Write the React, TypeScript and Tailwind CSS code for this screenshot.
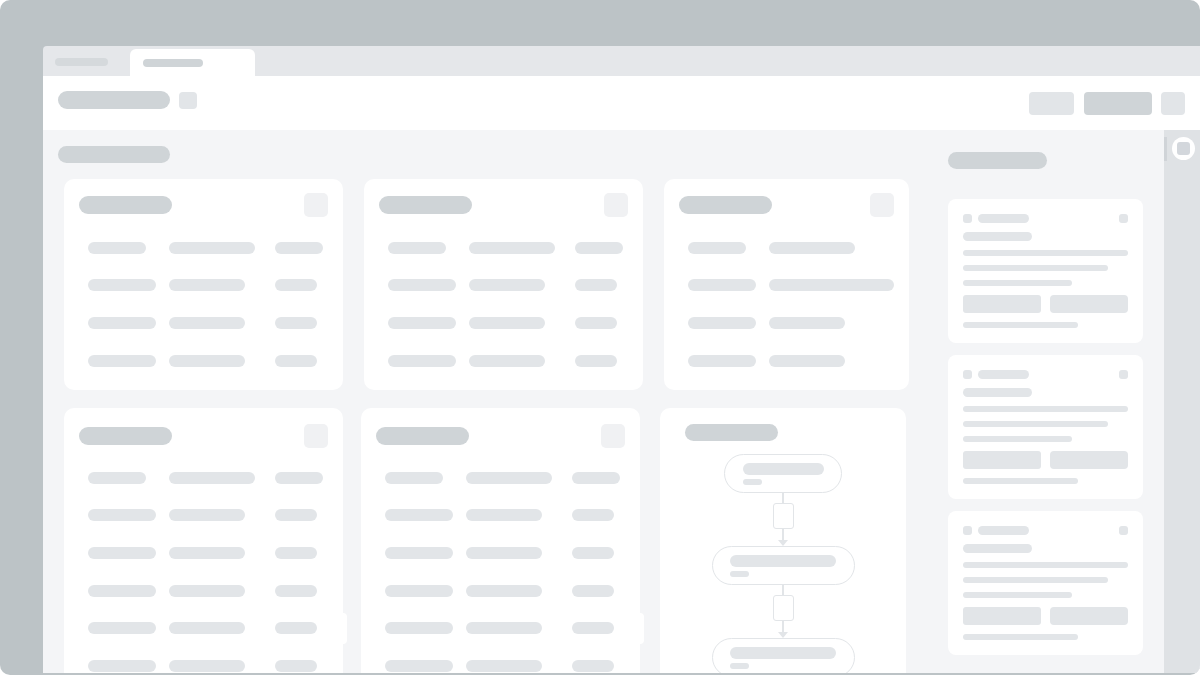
import React from 'react';

// skeleton colours
const DARK = 'bg-[#cfd4d7]';
const LIGHT = 'bg-[#e2e5e8]';

type Row = string[];

const firstRow: Row = ['w-[58px]', 'w-[86px]', 'w-[48px]'];
const otherRow: Row = ['w-[68px]', 'w-[76px]', 'w-[42px]'];

const rowsTop: Row[] = [firstRow, otherRow, otherRow, otherRow];
const rowsBottom: Row[] = [firstRow, otherRow, otherRow, otherRow, otherRow, otherRow];
const rowsNarrow: Row[] = [
  ['w-[58px]', 'w-[86px]'],
  ['w-[68px]', 'w-[125px]'],
  ['w-[68px]', 'w-[76px]'],
  ['w-[68px]', 'w-[76px]'],
];

const colWidths = ['w-[81px]', 'w-[106px]', ''];

const TableRows: React.FC<{ rows: Row[]; bumpIndex?: number }> = ({ rows, bumpIndex }) => (
  <div className="flex flex-col pl-[24px]">
    {rows.map((row, i) => (
      <div key={i} className="flex h-[37.6px] items-center">
        <div
          className={
            i === bumpIndex
              ? 'flex h-[31px] flex-1 items-center rounded-[4px] bg-white mr-[-4px]'
              : 'flex flex-1 items-center'
          }
        >
          {row.map((w, j) => (
            <div key={j} className={`shrink-0 ${colWidths[j]}`}>
              <div className={`h-[12px] rounded-full ${LIGHT} ${w}`} />
            </div>
          ))}
        </div>
      </div>
    ))}
  </div>
);

const CardHeader: React.FC = () => (
  <div className="flex h-[24px] items-center justify-between px-[15px]">
    <div className={`h-[18px] w-[93px] rounded-full ${DARK}`} />
    <div className="h-[24px] w-[24px] rounded-[5px] bg-[#f0f1f3]" />
  </div>
);

const TopCard: React.FC<{ width: string; rows: Row[] }> = ({ width, rows }) => (
  <div className={`h-[211px] shrink-0 rounded-[10px] bg-white pt-[14px] ${width}`}>
    <CardHeader />
    <div className="mt-[12px]">
      <TableRows rows={rows} />
    </div>
  </div>
);

const BottomCard: React.FC<{ width: string }> = ({ width }) => (
  <div className={`h-[300px] shrink-0 rounded-[10px] bg-white pt-[16px] ${width}`}>
    <CardHeader />
    <div className="mt-[11px]">
      <TableRows rows={rowsBottom} bumpIndex={4} />
    </div>
  </div>
);

const FlowNode: React.FC<{ width: string; inner: string; pad: string }> = ({ width, inner, pad }) => (
  <div
    className={`flex h-[39px] flex-col justify-center rounded-full border-[1.5px] border-[#e2e5e8] bg-white ${width} ${pad}`}
  >
    <div className={`h-[12px] rounded-full ${LIGHT} ${inner}`} />
    <div className={`mt-[4px] h-[6px] w-[19px] rounded-full ${LIGHT}`} />
  </div>
);

const Connector: React.FC = () => (
  <div className="flex flex-col items-center">
    <div className="h-[10px] w-[1.5px] bg-[#e2e5e8]" />
    <div className="h-[26px] w-[21px] rounded-[3px] border-[1.5px] border-[#e2e5e8]" />
    <div className="h-[11px] w-[1.5px] bg-[#e2e5e8]" />
    <svg width="10" height="6" viewBox="0 0 10 6" className="block">
      <path d="M0 0 L10 0 L5 6 Z" fill="#e2e5e8" />
    </svg>
  </div>
);

const FlowCard: React.FC = () => (
  <div className="h-[300px] w-[246px] shrink-0 rounded-[10px] bg-white pt-[16px]">
    <div className={`ml-[25px] h-[17px] w-[93px] rounded-full ${DARK}`} />
    <div className="mt-[13px] flex flex-col items-center">
      <FlowNode width="w-[118px]" inner="w-[81px]" pad="pl-[18px]" />
      <Connector />
      <FlowNode width="w-[143px]" inner="w-[106px]" pad="pl-[17px]" />
      <Connector />
      <FlowNode width="w-[143px]" inner="w-[106px]" pad="pl-[17px]" />
    </div>
  </div>
);

const SideCard: React.FC = () => (
  <div className="flex w-[195px] flex-col gap-[9px] rounded-[8px] bg-white p-[15px]">
    <div className="flex h-[9px] items-center">
      <div className={`h-[9px] w-[9px] rounded-[3px] ${LIGHT}`} />
      <div className={`ml-[6px] h-[9px] w-[51px] rounded-full ${LIGHT}`} />
      <div className={`ml-auto h-[9px] w-[9px] rounded-[3px] ${LIGHT}`} />
    </div>
    <div className={`h-[9px] w-[69px] rounded-full ${LIGHT}`} />
    <div className={`h-[6px] w-[165px] rounded-full ${LIGHT}`} />
    <div className={`h-[6px] w-[145px] rounded-full ${LIGHT}`} />
    <div className={`h-[6px] w-[109px] rounded-full ${LIGHT}`} />
    <div className="flex gap-[9px]">
      <div className={`h-[18px] w-[78px] rounded-[3px] ${LIGHT}`} />
      <div className={`h-[18px] w-[78px] rounded-[4px] ${LIGHT}`} />
    </div>
    <div className={`h-[6px] w-[115px] rounded-full ${LIGHT}`} />
  </div>
);

const App: React.FC = () => {
  return (
    <div className="h-[675px] w-[1200px] bg-white">
      <div className="h-full overflow-hidden rounded-[10px] bg-[#bcc3c6] pb-[2px] pl-[43px] pt-[46px]">
        <div className="flex h-full flex-col overflow-hidden rounded-tl-[4px] bg-[#e5e7ea]">
          {/* Tab strip */}
          <div className="flex h-[30px] shrink-0 items-start">
            <div className="ml-[12px] mt-[12px] h-[8px] w-[53px] rounded-full bg-[#d5d9dc]" />
            <div className="ml-[22px] mt-[3px] h-[27px] w-[125px] rounded-t-[6px] bg-white pl-[13px] pt-[10px]">
              <div className={`h-[8px] w-[60px] rounded-full ${DARK}`} />
            </div>
          </div>

          {/* Toolbar */}
          <div className="flex h-[54px] shrink-0 items-start bg-white px-[15px] pt-[15px]">
            <div className="flex items-start gap-[9px]">
              <div className={`h-[18px] w-[112px] rounded-full ${DARK}`} />
              <div className={`mt-[1px] h-[17px] w-[18px] rounded-[4px] ${LIGHT}`} />
            </div>
            <div className="ml-auto mt-[1px] flex items-start">
              <div className={`h-[23px] w-[45px] rounded-[4px] ${LIGHT}`} />
              <div className={`ml-[10px] h-[23px] w-[68px] rounded-[4px] ${DARK}`} />
              <div className={`ml-[9px] h-[23px] w-[24px] rounded-[4px] ${LIGHT}`} />
            </div>
          </div>

          {/* Body */}
          <div className="flex min-h-0 flex-1 bg-[#f4f5f7]">
            <div className="w-[882px] shrink-0 overflow-hidden pl-[15px] pt-[16px]">
              <div className={`h-[17px] w-[112px] rounded-full ${DARK}`} />
              <div className="ml-[6px] mt-[16px] flex gap-[21px]">
                <TopCard width="w-[279px]" rows={rowsTop} />
                <TopCard width="w-[279px]" rows={rowsTop} />
                <TopCard width="w-[245px]" rows={rowsNarrow} />
              </div>
              <div className="ml-[6px] mt-[18px] flex">
                <BottomCard width="w-[279px]" />
                <div className="ml-[18px]">
                  <BottomCard width="w-[279px]" />
                </div>
                <div className="ml-[20px]">
                  <FlowCard />
                </div>
              </div>
            </div>

            <div className="w-[239px] shrink-0 overflow-hidden pl-[23px] pt-[22px]">
              <div className={`h-[17px] w-[99px] rounded-full ${DARK}`} />
              <div className="mt-[30px] flex flex-col gap-[12px]">
                <SideCard />
                <SideCard />
                <SideCard />
              </div>
            </div>

            <div className="relative w-[36px] shrink-0 bg-[#dfe2e5]">
              <div className="mt-[7px] h-[24px] w-[3px] bg-[#d0d4d8]" />
              <div className="absolute left-[8px] top-[7px] flex h-[23px] w-[23px] items-center justify-center rounded-full bg-white">
                <div className="h-[13px] w-[13px] rounded-[3px] bg-[#d3d7dc]" />
              </div>
            </div>
          </div>
        </div>
      </div>
    </div>
  );
};

export default App;
